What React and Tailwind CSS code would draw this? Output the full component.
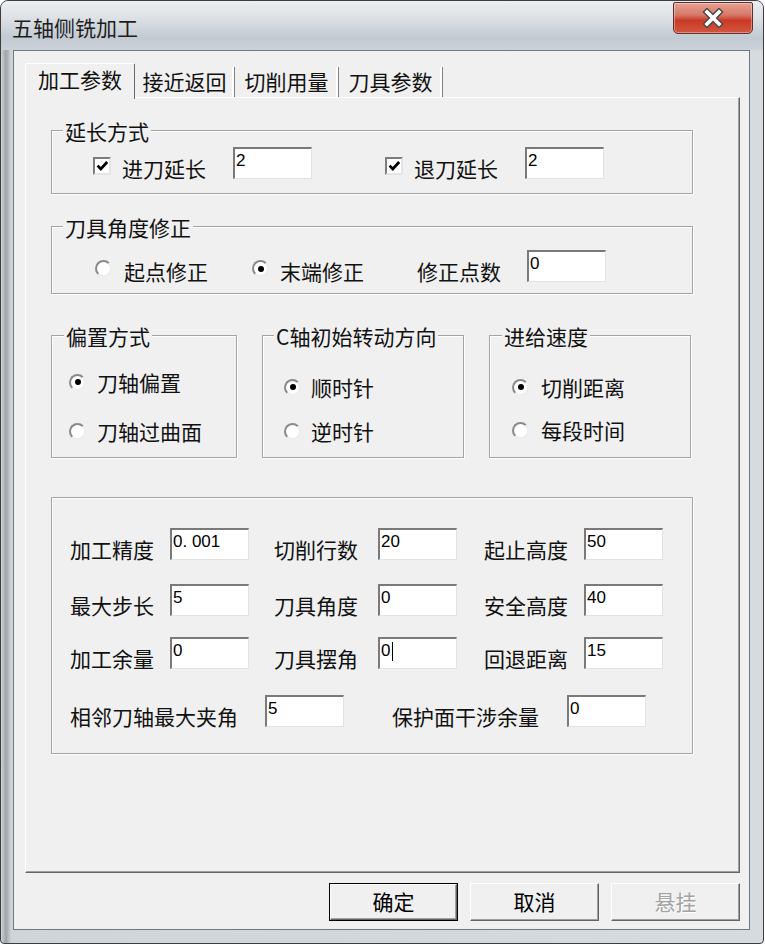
import React from "react";

const Field = ({ value, caret, w = "w-[79px]" }) => (
   <div
      className={`${w} h-[32px] shrink-0 flex items-center pl-[1px] pb-[5px] bg-white border-t-2 border-l-2 border-t-[#7a7a7a] border-l-[#7a7a7a] border-r border-b border-r-[#e2e2e2] border-b-[#e2e2e2] font-['Liberation_Sans',sans-serif] text-[17px] leading-[20px] text-black`}
   >
      <span>{value}</span>
      {caret && <span className="ml-[2px] w-[1px] h-[19px] bg-black" />}
   </div>
);

const Check = () => (
   <div className="w-[18px] h-[18px] shrink-0 flex items-center justify-center bg-white border-2 border-t-[#7c7c7c] border-l-[#7c7c7c] border-r-[#e4e4e4] border-b-[#e4e4e4]">
      <svg width="13" height="12" viewBox="0 0 13 12">
         <path d="M1.6 5.6 L4.8 9 L11.2 2" fill="none" stroke="#000" strokeWidth="2.8" />
      </svg>
   </div>
);

const Radio = ({ on }) => (
   <div className="w-[17px] h-[17px] shrink-0 rounded-full flex items-center justify-center bg-white border-2 border-t-[#8a8a8a] border-l-[#8a8a8a] border-r-[#ededed] border-b-[#ededed]">
      {on && <div className="w-[6px] h-[6px] rounded-full bg-black" />}
   </div>
);

const GroupBox = ({ title, titleLeft, className, children }) => (
   <div
      className={`relative border border-[#a4a4a4] shadow-[inset_1px_1px_0_#fff,1px_1px_0_#fff] ${className}`}
   >
      {title && (
         <span className={`absolute -top-[11px] ${titleLeft} px-[2px] bg-[#f0f0f0] leading-[22px] whitespace-nowrap`}>
            {title}
         </span>
      )}
      {children}
   </div>
);

const RadioRow = ({ on, label, radioMl, labelMl, className }) => (
   <div className={`flex items-center h-[24px] ${className}`}>
      <div className={radioMl}>
         <Radio on={on} />
      </div>
      <span className={`${labelMl} leading-[24px] whitespace-nowrap`}>{label}</span>
   </div>
);

const Label = ({ text, w, ml = "" }) => (
   <span className={`${w} ${ml} shrink-0 mt-[9px] leading-[24px] whitespace-nowrap`}>{text}</span>
);

const Button = ({ label, primary, disabled }) => (
   <div className={`w-[129px] h-[38px] ${primary ? "border border-black" : ""}`}>
      <div
         className={`w-full h-full flex items-center justify-center bg-[#f0f0f0] border-t border-l border-t-white border-l-white border-r border-b border-r-[#646464] border-b-[#646464] shadow-[inset_-1px_-1px_0_#a0a0a0] ${
            disabled ? "text-[#a3a3a3] [text-shadow:1px_1px_0_#fff]" : "text-black"
         }`}
      >
         {label}
      </div>
   </div>
);

const CloseButton = () => (
   <div className="mt-[1px] mr-[10px] w-[80px] h-[32px] flex items-center justify-center rounded-b-[5px] rounded-t-[2px] border border-[#5e2f2a] bg-[linear-gradient(180deg,#e6a294_0%,#d77867_40%,#c93a26_58%,#d2573f_100%)] shadow-[inset_0_0_0_1px_rgba(255,255,255,0.35)]">
      <svg width="26" height="20" viewBox="0 0 26 20">
         <path d="M7 4 L19 16 M19 4 L7 16" stroke="#4b4b4b" strokeWidth="6.5" strokeLinecap="square" />
         <path d="M7 4 L19 16 M19 4 L7 16" stroke="#ffffff" strokeWidth="3.6" strokeLinecap="square" />
      </svg>
   </div>
);

export default function App() {
   return (
      <div className="w-[765px] h-[945px] bg-white font-['Noto_Sans_CJK_SC','Liberation_Sans',sans-serif] text-[21px] text-[#111]">
         <div className="w-[764px] h-[944px] flex flex-col rounded-t-[8px] rounded-b-[4px] border border-[#3d3d3d] bg-[linear-gradient(90deg,#cfd4d9_0px,#9da3a9_5px,#cfd4d9_10px,#d6dbe0_100%)] overflow-hidden">
            {/* title bar */}
            <div className="h-[49px] shrink-0 flex items-start justify-between bg-[linear-gradient(180deg,#eceef1_0%,#dde1e5_35%,#c2cad2_75%,#ccd2d8_100%)]">
               <div className="pl-[11px] pt-[13px] leading-[26px] text-[#1d1d1d]">五轴侧铣加工</div>
               <CloseButton />
            </div>

            {/* client area */}
            <div className="ml-[12px] w-[737px] h-[880px] shrink-0 bg-[#f0f0f0] border border-[#6f7882] pl-[11px] pt-[12px]">
               {/* tabs */}
               <div className="flex items-end h-[34px]">
                  <div className="relative z-10 w-[110px] h-[36px] -mb-[2px] pb-[4px] flex items-center justify-center bg-[#f0f0f0] border-t border-l border-t-white border-l-white border-r border-r-[#6a6a6a] rounded-t-[2px]">
                     加工参数
                  </div>
                  <div className="w-[100px] h-[30px] flex items-center justify-center border-r border-r-[#808080] shadow-[inset_-2px_0_0_#fff]">
                     接近返回
                  </div>
                  <div className="w-[104px] h-[30px] flex items-center justify-center border-r border-r-[#808080] shadow-[inset_-2px_0_0_#fff]">
                     切削用量
                  </div>
                  <div className="w-[104px] h-[30px] flex items-center justify-center border-r border-r-[#808080] shadow-[inset_-2px_0_0_#fff]">
                     刀具参数
                  </div>
               </div>

               {/* tab panel */}
               <div className="w-[715px] h-[776px] pl-[25px] pt-[32px] border-t border-l border-t-white border-l-white border-r border-b border-r-[#666] border-b-[#666] shadow-[inset_-1px_-1px_0_#a0a0a0]">
                  <GroupBox title="延长方式" titleLeft="left-[11px]" className="w-[642px] h-[64px]">
                     <div className="mt-[16px] flex items-center h-[32px]">
                        <div className="ml-[41px] mt-[6px]">
                           <Check />
                        </div>
                        <Label text="进刀延长" w="w-[111px]" ml="ml-[11px]" />
                        <Field value="2" />
                        <div className="ml-[73px] mt-[6px]">
                           <Check />
                        </div>
                        <Label text="退刀延长" w="w-[111px]" ml="ml-[11px]" />
                        <Field value="2" />
                     </div>
                  </GroupBox>

                  <GroupBox title="刀具角度修正" titleLeft="left-[11px]" className="mt-[32px] w-[642px] h-[68px]">
                     <div className="mt-[23px] flex items-center h-[32px]">
                        <div className="ml-[43px] mt-[5px]">
                           <Radio />
                        </div>
                        <Label text="起点修正" w="w-[84px]" ml="ml-[12px]" />
                        <div className="ml-[44px] mt-[5px]">
                           <Radio on />
                        </div>
                        <Label text="末端修正" w="w-[84px]" ml="ml-[11px]" />
                        <Label text="修正点数" w="w-[110px]" ml="ml-[53px]" />
                        <Field value="0" />
                     </div>
                  </GroupBox>

                  <div className="mt-[41px] flex h-[123px]">
                     <GroupBox title="偏置方式" titleLeft="left-[12px]" className="w-[186px] h-full">
                        <RadioRow on label="刀轴偏置" radioMl="ml-[17px]" labelMl="ml-[11px]" className="mt-[34px]" />
                        <RadioRow label="刀轴过曲面" radioMl="ml-[17px]" labelMl="ml-[11px]" className="mt-[25px]" />
                     </GroupBox>
                     <GroupBox title="C轴初始转动方向" titleLeft="left-[11px]" className="ml-[25px] w-[202px] h-full">
                        <RadioRow on label="顺时针" radioMl="ml-[21px]" labelMl="ml-[10px]" className="mt-[39px]" />
                        <RadioRow label="逆时针" radioMl="ml-[21px]" labelMl="ml-[10px]" className="mt-[20px]" />
                     </GroupBox>
                     <GroupBox title="进给速度" titleLeft="left-[12px]" className="ml-[25px] w-[202px] h-full">
                        <RadioRow on label="切削距离" radioMl="ml-[22px]" labelMl="ml-[12px]" className="mt-[39px]" />
                        <RadioRow label="每段时间" radioMl="ml-[22px]" labelMl="ml-[12px]" className="mt-[19px]" />
                     </GroupBox>
                  </div>

                  <GroupBox className="mt-[39px] w-[642px] h-[257px]">
                     <div className="mt-[30px] flex items-center h-[32px]">
                        <Label text="加工精度" w="w-[100px]" ml="ml-[18px]" />
                        <Field value="0. 001" />
                        <Label text="切削行数" w="w-[104px]" ml="ml-[25px]" />
                        <Field value="20" />
                        <Label text="起止高度" w="w-[100px]" ml="ml-[27px]" />
                        <Field value="50" />
                     </div>
                     <div className="mt-[24px] flex items-center h-[32px]">
                        <Label text="最大步长" w="w-[100px]" ml="ml-[18px]" />
                        <Field value="5" />
                        <Label text="刀具角度" w="w-[104px]" ml="ml-[25px]" />
                        <Field value="0" />
                        <Label text="安全高度" w="w-[100px]" ml="ml-[27px]" />
                        <Field value="40" />
                     </div>
                     <div className="mt-[21px] flex items-center h-[32px]">
                        <Label text="加工余量" w="w-[100px]" ml="ml-[18px]" />
                        <Field value="0" />
                        <Label text="刀具摆角" w="w-[104px]" ml="ml-[25px]" />
                        <Field value="0" caret />
                        <Label text="回退距离" w="w-[100px]" ml="ml-[27px]" />
                        <Field value="15" />
                     </div>
                     <div className="mt-[26px] flex items-center h-[32px]">
                        <Label text="相邻刀轴最大夹角" w="w-[195px]" ml="ml-[18px]" />
                        <Field value="5" />
                        <Label text="保护面干涉余量" w="w-[175px]" ml="ml-[48px]" />
                        <Field value="0" />
                     </div>
                  </GroupBox>
               </div>

               {/* buttons */}
               <div className="mt-[10px] w-[715px] flex justify-end gap-[12px]">
                  <Button label="确定" primary />
                  <Button label="取消" />
                  <Button label="悬挂" disabled />
               </div>
            </div>
         </div>
      </div>
   );
}
